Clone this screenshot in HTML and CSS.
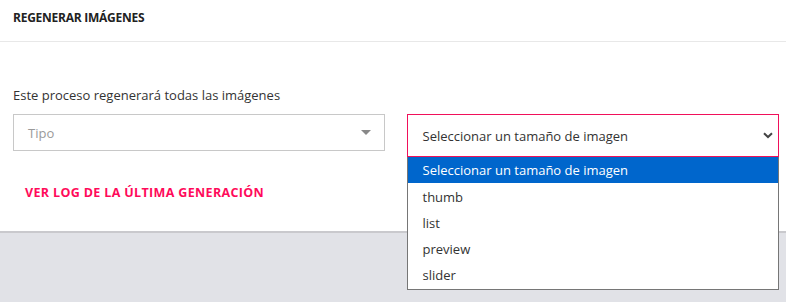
FILE: index.html
```html
<!DOCTYPE html>
<html lang="es">
<head>
    <meta charset="UTF-8">
    <title>Regenerar imágenes</title>
    <link rel="stylesheet" href="styles.css">
</head>
<body>
<div class="panel">
    <div class="panel-head">
        <h2>REGENERAR IMÁGENES</h2>
    </div>
    <div class="panel-body">
        <p class="lead">Este proceso regenerará todas las imágenes</p>
        <div class="row">
            <div class="field">
                <div class="select muted">
                    <span>Tipo</span>
                    <span class="caret"></span>
                </div>
            </div>
            <div class="field open">
                <div class="select active">
                    <span>Seleccionar un tamaño de imagen</span>
                    <svg class="chev" width="10" height="7" viewBox="0 0 10 7"><path d="M1 1.2 5 5 9 1.2" fill="none" stroke="#444" stroke-width="2"/></svg>
                </div>
                <ul class="options">
                    <li class="sel">Seleccionar un tamaño de imagen</li>
                    <li>thumb</li>
                    <li>list</li>
                    <li>preview</li>
                    <li>slider</li>
                </ul>
            </div>
        </div>
        <a class="log" href="#">VER LOG DE LA ÚLTIMA GENERACIÓN</a>
    </div>
</div>
<div class="rest"></div>
</body>
</html>
```

FILE: styles.css
```css
*{box-sizing:border-box;}
body{margin:0;background:#e1e2e7;font-family:"Open Sans","Noto Sans",sans-serif;color:#333;}
.panel{position:relative;z-index:2;background:#fff;border-bottom:2px solid #c9c9cd;height:233px;}
.rest{height:69px;}
.panel-head{height:42px;border-bottom:1px solid #e8e8e8;padding:9px 13px 0;}
.panel-head h2{margin:0;font-size:12px;font-weight:700;letter-spacing:-.25px;color:#222;font-family:"Open Sans",sans-serif;}
.panel-body{padding:0 7px 0 13px;}
.lead{margin:44px 0 10px;font-size:13px;line-height:18px;color:#333;}
.row{display:flex;gap:22px;align-items:flex-start;}
.field{position:relative;width:372px;}
.field.open{width:373px;}
.select{display:flex;align-items:center;justify-content:space-between;border:1px solid #c8c8c8;height:37px;padding:0 12px 0 14px;font-size:13px;}
.select.muted{color:#9a9a9a;}
.caret{width:0;height:0;border-left:5px solid transparent;border-right:5px solid transparent;border-top:5px solid #888;margin-right:1px;}
.select.active{border:1px solid #f0105a;height:43px;padding:0 5px 0 15px;color:#333;}
.options{position:absolute;z-index:5;left:0;right:0;top:43px;margin:0;padding:0 0 2px;list-style:none;background:#fff;border:1px solid #767676;border-top:none;font-size:13px;}
.options li{height:26px;line-height:28px;padding-left:15px;color:#333;}
.options li.sel{line-height:26px;background:#0066cc;color:#fff;}
.log{display:inline-block;margin:27px 0 0 12px;font-size:12.5px;font-weight:700;color:#ff0a5a;text-decoration:none;letter-spacing:.35px;}
```
